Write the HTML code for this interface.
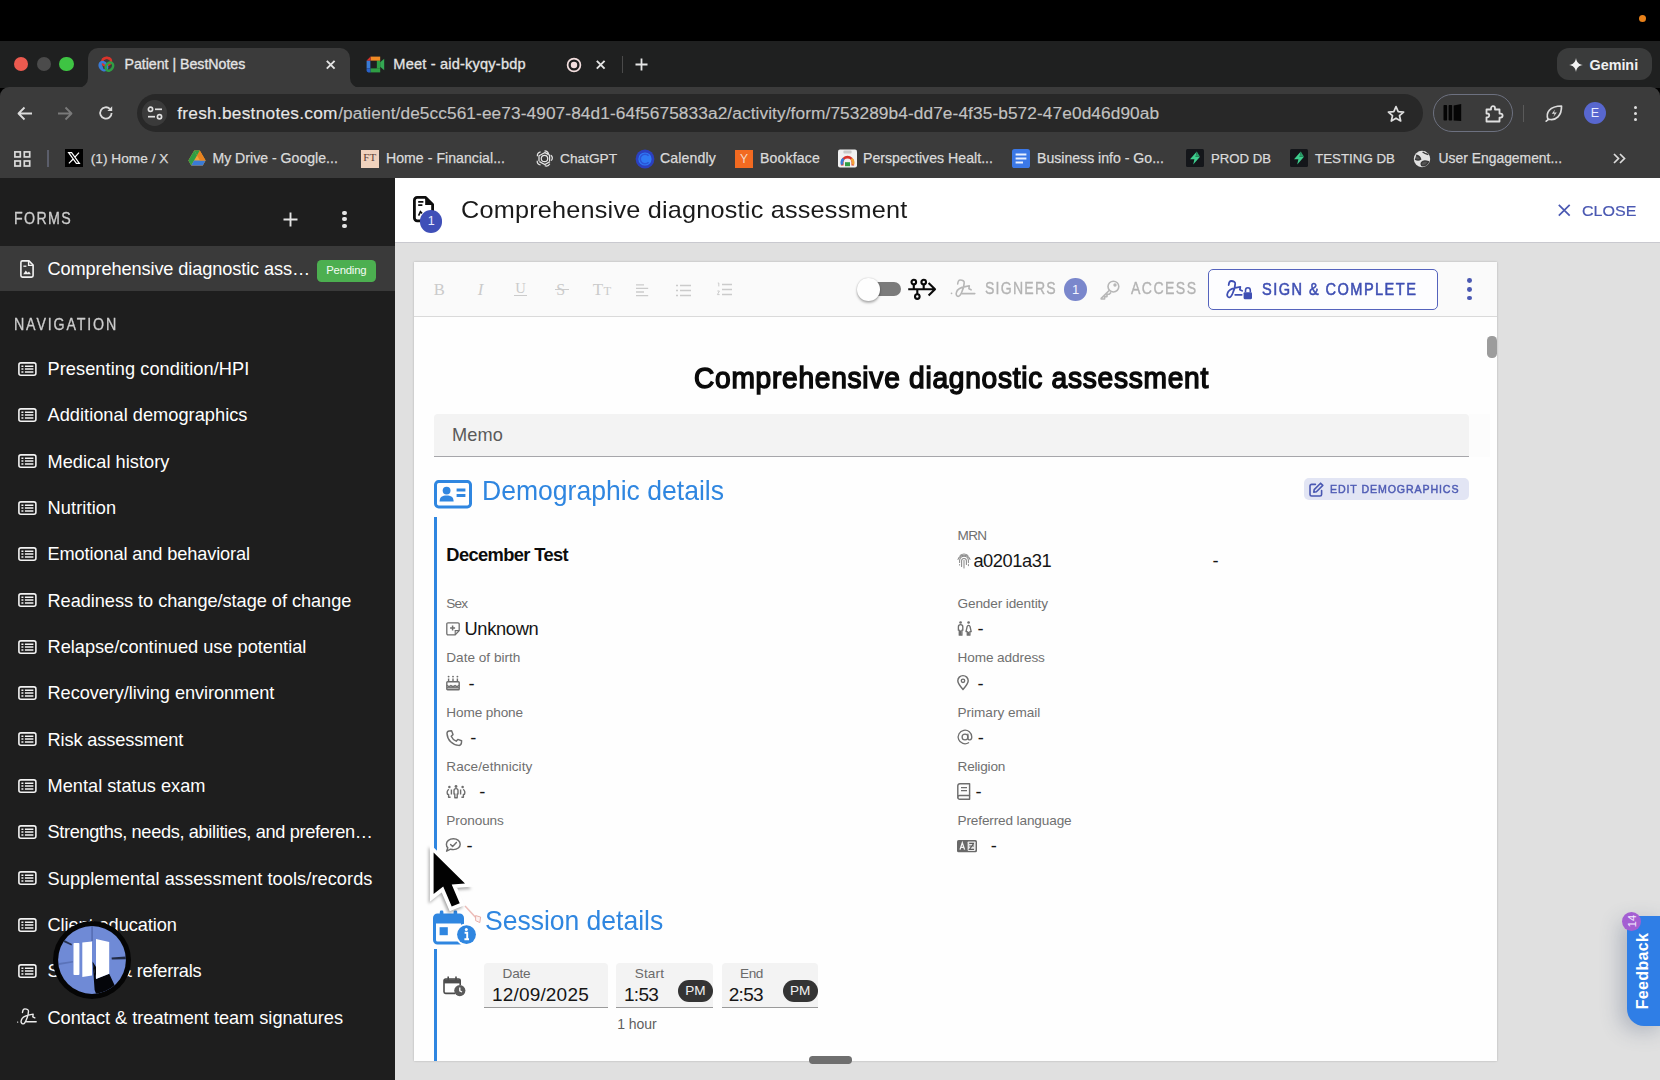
<!DOCTYPE html>
<html>
<head>
<meta charset="utf-8">
<title>Patient | BestNotes</title>
<style>
*{box-sizing:border-box;margin:0;padding:0}
html,body{width:1660px;height:1080px;overflow:hidden;background:#000;font-family:"Liberation Sans",sans-serif;}
.abs{position:absolute}
#root{position:relative;width:1660px;height:1080px;overflow:hidden;background:#000}
.t{position:absolute;white-space:nowrap;line-height:1}
svg{overflow:visible}
</style>
</head>
<body>
<div id="root">
<div class="abs" style="left:0px;top:41px;width:1660px;height:47px;background:#1f2020;"></div>
<div class="abs" style="left:0px;top:87px;width:1660px;height:91px;background:#3b3b3b;border-radius:9px 9px 0 0;"></div>
<div class="abs" style="left:88px;top:48px;width:262px;height:40px;background:#3b3b3b;border-radius:10px 10px 0 0;"></div>
<svg class="abs" style="left:78px;top:78px;" width="10" height="10" viewBox="0 0 10 10"><path d="M10 0 V10 H0 A10 10 0 0 0 10 0Z" fill="#3b3b3b"/></svg>
<svg class="abs" style="left:350px;top:78px;" width="10" height="10" viewBox="0 0 10 10"><path d="M0 0 V10 H10 A10 10 0 0 1 0 0Z" fill="#3b3b3b"/></svg>
<div class="abs" style="left:1638.5px;top:14.5px;width:7px;height:7px;background:#e8811a;border-radius:50%;"></div>
<div class="abs" style="left:14px;top:57px;width:14.4px;height:14.4px;background:#ec5a4f;border-radius:50%;"></div>
<div class="abs" style="left:36.7px;top:57px;width:14.4px;height:14.4px;background:#4b4b4b;border-radius:50%;"></div>
<div class="abs" style="left:59.3px;top:57px;width:14.4px;height:14.4px;background:#3ec443;border-radius:50%;"></div>
<svg class="abs" style="left:96.5px;top:54.5px;" width="19" height="19" viewBox="0 0 19 19"><g fill="none" stroke-width="2.5" stroke-linecap="round">
<ellipse cx="9.5" cy="6.6" rx="4.6" ry="3.6" stroke="#d9342b" transform="rotate(-18 9.5 6.6)"/>
<ellipse cx="6.4" cy="11.2" rx="4.4" ry="3.4" stroke="#3a7bd5" transform="rotate(55 6.4 11.2)"/>
<ellipse cx="12.4" cy="11.6" rx="4.4" ry="3.4" stroke="#2f9e44" transform="rotate(-55 12.4 11.6)"/>
<path d="M6 4.2 A4.6 3.6 -18 0 1 12 3.4" stroke="#d9342b"/><path d="M3.2 8.6 L5.2 13.8" stroke="#3a7bd5"/></g></svg>
<div class="t" style="left:124.50px;top:57.36px;font-size:14.2px;color:#e4e4e4;letter-spacing:-0.021px;-webkit-text-stroke:0.3px #e4e4e4;">Patient | BestNotes</div>
<svg class="abs" style="left:326.4px;top:59.6px;" width="9.4" height="9.4" viewBox="0 0 9.4 9.4"><path d="M0.8 0.8 L8.6 8.6 M8.6 0.8 L0.8 8.6" stroke="#e4e4e4" stroke-width="1.9" fill="none"/></svg>
<svg class="abs" style="left:366px;top:55.5px;" width="19" height="17" viewBox="0 0 19 17"><path d="M4.6 0.6 H14.2 V4.8 H4.6Z" fill="#f08a24"/><path d="M0.6 4.6 L4.6 0.6 V4.8 H0.6Z" fill="#d9342b"/>
<rect x="0.6" y="4.8" width="4" height="7.4" fill="#3a7bd5"/><path d="M0.6 12.2 H4.6 V16.4 H2.4 A1.8 1.8 0 0 1 0.6 14.6Z" fill="#2a62c9"/>
<path d="M4.6 12.2 H14.2 V16.4 H4.6Z" fill="#2f9e44"/><path d="M10.6 4.8 H14.2 V12.2 H10.6Z" fill="#2f9e44"/>
<path d="M14.2 6.2 L18.2 2.8 V14.2 L14.2 10.8Z" fill="#34a853"/><rect x="4.6" y="4.8" width="6" height="7.4" fill="#1f2020"/></svg>
<div class="t" style="left:393.30px;top:57.17px;font-size:14.6px;color:#e4e4e4;letter-spacing:0.186px;-webkit-text-stroke:0.3px #e4e4e4;">Meet - aid-kyqy-bdp</div>
<svg class="abs" style="left:565.5px;top:56.5px;" width="16" height="16" viewBox="0 0 16 16"><circle cx="8" cy="8" r="6.4" fill="none" stroke="#f3dede" stroke-width="1.7"/><circle cx="8" cy="8" r="3.2" fill="#f3dede"/></svg>
<svg class="abs" style="left:596.4px;top:59.6px;" width="9.4" height="9.4" viewBox="0 0 9.4 9.4"><path d="M0.8 0.8 L8.6 8.6 M8.6 0.8 L0.8 8.6" stroke="#e4e4e4" stroke-width="1.9" fill="none"/></svg>
<div class="abs" style="left:621.5px;top:56px;width:1.6px;height:17px;background:#4a4a4a;"></div>
<svg class="abs" style="left:635px;top:58px;" width="13" height="13" viewBox="0 0 13 13"><path d="M6.5 0.5 V12.5 M0.5 6.5 H12.5" stroke="#e6e6e6" stroke-width="1.8" fill="none"/></svg>
<div class="abs" style="left:1557px;top:48px;width:95px;height:32px;background:#3a3b3b;border-radius:12px;"></div>
<svg class="abs" style="left:1568.5px;top:57.5px;" width="14" height="14" viewBox="0 0 14 14"><path d="M7 0 C7.6 4.2 9.8 6.4 14 7 C9.8 7.6 7.6 9.8 7 14 C6.4 9.8 4.2 7.6 0 7 C4.2 6.4 6.4 4.2 7 0Z" fill="#f2f2f2"/></svg>
<div class="t" style="left:1589.50px;top:57.57px;font-size:14.4px;color:#f0f0f0;font-weight:700;letter-spacing:-0.030px;">Gemini</div>
<svg class="abs" style="left:17px;top:106px;" width="16" height="15" viewBox="0 0 16 15"><path d="M15 7.5 H2 M7.5 1.5 L1.5 7.5 L7.5 13.5" stroke="#dcdcdc" stroke-width="1.8" fill="none" stroke-linejoin="round"/></svg>
<svg class="abs" style="left:57px;top:106px;" width="16" height="15" viewBox="0 0 16 15"><path d="M1 7.5 H14 M8.5 1.5 L14.5 7.5 L8.5 13.5" stroke="#7a7a7a" stroke-width="1.8" fill="none" stroke-linejoin="round"/></svg>
<svg class="abs" style="left:98px;top:105px;" width="16" height="16" viewBox="0 0 16 16"><path d="M13.6 8 A5.7 5.7 0 1 1 11.9 3.9" stroke="#dcdcdc" stroke-width="1.8" fill="none"/><path d="M14.2 1.2 V6 H9.4Z" fill="#dcdcdc"/></svg>
<div class="abs" style="left:136.5px;top:94px;width:1286.5px;height:37.6px;background:#282828;border-radius:19px;"></div>
<div class="abs" style="left:142px;top:100.3px;width:25.4px;height:25.4px;background:#3a3a3a;border-radius:50%;"></div>
<svg class="abs" style="left:146.5px;top:106px;" width="16" height="14" viewBox="0 0 16 14"><g stroke="#e0e0e0" stroke-width="1.7" fill="none"><circle cx="3.5" cy="3.3" r="2.1"/><path d="M8 3.3 H15"/>
<circle cx="12.5" cy="10.7" r="2.1"/><path d="M1 10.7 H8"/></g></svg>
<div class="t" style="left:177.20px;top:105.05px;font-size:17.3px;color:#e6e6e6;letter-spacing:0.257px;-webkit-text-stroke:0.15px #e6e6e6;">fresh.bestnotes.com</div>
<div class="t" style="left:338.20px;top:105.05px;font-size:17.3px;color:#c2c2c2;letter-spacing:0.085px;-webkit-text-stroke:0.15px #c2c2c2;">/patient/de5cc561-ee73-4907-84d1-64f5675833a2/activity/form/753289b4-dd7e-4f35-b572-47e0d46d90ab</div>
<svg class="abs" style="left:1387px;top:104.5px;" width="18" height="17" viewBox="0 0 18 17"><path d="M9 1.6 L11.2 6.6 L16.6 7.1 L12.5 10.7 L13.7 16 L9 13.2 L4.3 16 L5.5 10.7 L1.4 7.1 L6.8 6.6Z" stroke="#dedede" stroke-width="1.7" fill="none" stroke-linejoin="round"/></svg>
<div class="abs" style="left:1433px;top:94px;width:79.5px;height:37.6px;border:1.2px solid #6d7180;border-radius:19px;"></div>
<svg class="abs" style="left:1443px;top:104px;" width="19" height="18" viewBox="0 0 19 18"><rect x="0.5" y="1" width="3.6" height="15.5" rx="0.8" fill="#050505"/><rect x="5.6" y="1" width="3.6" height="15.5" rx="0.8" fill="#050505"/><path d="M10.6 1.6 L18.2 0 V17 L10.6 16.4Z" fill="#050505"/></svg>
<svg class="abs" style="left:1485px;top:103.5px;" width="18" height="19" viewBox="0 0 18 19"><path d="M1.5 5.5 H6 V4.2 A2 2 0 0 1 10 4.2 V5.5 H14.5 V9.6 H15.6 A2 2 0 0 1 15.6 13.6 H14.5 V17.5 H1.5 V13.3 H2.3 A1.9 1.9 0 0 0 2.3 9.5 H1.5Z" stroke="#e0e0e0" stroke-width="1.8" fill="none" stroke-linejoin="round"/></svg>
<div class="abs" style="left:1522.8px;top:104.5px;width:1.6px;height:17px;background:#5a5a5a;"></div>
<svg class="abs" style="left:1545px;top:104px;" width="18" height="18" viewBox="0 0 18 18"><path d="M3 15.5 C0.5 9 4.5 2 16.5 2 C16.8 11.5 11 17 3.8 15.2 L1.2 17.2" stroke="#dcdcdc" stroke-width="1.7" fill="none" stroke-linejoin="round" stroke-linecap="round"/><path d="M10 5.5 L6.8 9.8 H9.6 L8.3 13 L11.8 8.6 H9Z" fill="#dcdcdc"/></svg>
<div class="abs" style="left:1583.8px;top:101.8px;width:22.6px;height:22.6px;background:#5867cf;border-radius:50%;"></div>
<div class="t" style="left:1590.83px;top:107.19px;font-size:12.5px;color:#e8ebff;">E</div>
<div class="abs" style="left:1633.8px;top:106.0px;width:3px;height:3px;background:#e0e0e0;border-radius:50%;"></div>
<div class="abs" style="left:1633.8px;top:111.9px;width:3px;height:3px;background:#e0e0e0;border-radius:50%;"></div>
<div class="abs" style="left:1633.8px;top:117.8px;width:3px;height:3px;background:#e0e0e0;border-radius:50%;"></div>
<svg class="abs" style="left:14px;top:150.5px;" width="17" height="16" viewBox="0 0 17 16"><g stroke="#dcdcdc" stroke-width="1.7" fill="none"><rect x="0.9" y="0.9" width="5.4" height="5" /><rect x="10.3" y="0.9" width="5.4" height="5"/><rect x="0.9" y="10" width="5.4" height="5"/><rect x="10.3" y="10" width="5.4" height="5"/></g></svg>
<div class="abs" style="left:47.3px;top:149.5px;width:1.6px;height:17px;background:#5b5e6b;"></div>
<div class="abs" style="left:65px;top:149px;width:18px;height:18px;background:#000;"></div>
<svg class="abs" style="left:68px;top:152px;" width="12" height="12" viewBox="0 0 12 12"><path d="M0.6 0.6 H3.6 L11.4 11.4 H8.4Z M11 0.6 L6.7 5.4 M5.2 7 L0.9 11.4" stroke="#fff" stroke-width="1.2" fill="none"/></svg>
<div class="t" style="left:90.80px;top:151.61px;font-size:13.7px;color:#dadada;-webkit-text-stroke:0.25px #dadada;">(1) Home / X</div>
<svg class="abs" style="left:188px;top:150px;" width="18" height="16" viewBox="0 0 18 16"><path d="M6.2 0.5 H11.8 L17.6 10.6 L14.8 15.5 H3.2 L0.4 10.6Z" fill="#f2a33a"/><path d="M6.2 0.5 L0.4 10.6 L3.2 15.5 L9 5.4Z" fill="#2f9e44"/><path d="M3.2 15.5 H14.8 L17.6 10.6 H6Z" fill="#3a7bd5"/><path d="M11.8 0.5 L17.6 10.6 H12 L9 5.4Z" fill="#e8831f"/><path d="M9 5.4 L6.2 0.5 H11.8Z" fill="#2f9e44"/></svg>
<div class="t" style="left:212.40px;top:151.41px;font-size:14.1px;color:#dadada;letter-spacing:0.009px;-webkit-text-stroke:0.25px #dadada;">My Drive - Google...</div>
<div class="abs" style="left:361px;top:149.5px;width:18px;height:18px;background:#f0d2bd;"></div>
<div class="t" style="left:363.27px;top:152.13px;font-size:11px;color:#5a4036;font-family:'Liberation Serif',serif;">FT</div>
<div class="t" style="left:386.00px;top:151.41px;font-size:14.1px;color:#dadada;letter-spacing:0.038px;-webkit-text-stroke:0.25px #dadada;">Home - Financial...</div>
<svg class="abs" style="left:535.5px;top:149.5px;" width="17" height="17" viewBox="0 0 17 17"><g stroke="#e4e4e4" stroke-width="1.25" fill="none"><circle cx="8.5" cy="8.5" r="3.2"/>
<path d="M8.5 1 a4 4 0 0 1 4 3.2 M15 5.2 a4 4 0 0 1 0.2 5.4 M13.8 13.8 a4 4 0 0 1 -5 1.9 M4.6 15 a4 4 0 0 1 -3.4 -4.2 M1.4 6.2 a4 4 0 0 1 3.2 -4.4 M3 11.2 L3 5.8 L8.5 2.8 M8.5 2.4 L13.6 5.2 L13.6 11 M14 11.6 L8.8 14.6 L3.4 11.6"/></g></svg>
<div class="t" style="left:560.00px;top:151.61px;font-size:13.7px;color:#dadada;letter-spacing:-0.009px;-webkit-text-stroke:0.25px #dadada;">ChatGPT</div>
<svg class="abs" style="left:635px;top:148.5px;" width="20" height="20" viewBox="0 0 20 20"><circle cx="10" cy="10" r="9.4" fill="#2b40c0"/><circle cx="10" cy="10" r="6.6" fill="#2f7af4"/><path d="M13.6 6.8 A4.8 4.8 0 1 0 13.6 13.2" stroke="#2b55d8" stroke-width="1.6" fill="none"/></svg>
<div class="t" style="left:660.00px;top:151.41px;font-size:14.1px;color:#dadada;letter-spacing:0.145px;-webkit-text-stroke:0.25px #dadada;">Calendly</div>
<div class="abs" style="left:735px;top:149.5px;width:18px;height:18px;background:#f26a21;"></div>
<div class="t" style="left:739.99px;top:152.64px;font-size:12px;color:#f6d9c6;">Y</div>
<div class="t" style="left:760.00px;top:151.41px;font-size:14.1px;color:#dadada;letter-spacing:0.154px;-webkit-text-stroke:0.25px #dadada;">Bookface</div>
<svg class="abs" style="left:838px;top:149px;" width="19" height="19" viewBox="0 0 19 19"><rect x="0" y="0.5" width="19" height="18" rx="2" fill="#f1f1f1"/><rect x="5.4" y="1.4" width="8.2" height="3" rx="1" fill="#c9c9c9"/><path d="M4.2 16.4 V13.4 A5.3 5.3 0 0 1 14.8 13.4 V16.4" stroke="#d9342b" stroke-width="2.6" fill="none"/><path d="M4.2 15.6 A5.3 5.3 0 0 1 5.6 9.8" stroke="#3a7bd5" stroke-width="2.6" fill="none"/><path d="M13.4 9.8 A5.3 5.3 0 0 1 14.8 15.6" stroke="#f2a33a" stroke-width="2.6" fill="none"/><rect x="7" y="13.2" width="5" height="4" fill="#2f9e44"/></svg>
<div class="t" style="left:863.00px;top:151.41px;font-size:14.1px;color:#dadada;letter-spacing:0.036px;-webkit-text-stroke:0.25px #dadada;">Perspectives Healt...</div>
<svg class="abs" style="left:1012px;top:149px;" width="18" height="19" viewBox="0 0 18 19"><rect x="0" y="0" width="18" height="19" rx="2.6" fill="#3b78e7"/><path d="M3.6 5.5 H14.4 M3.6 9.5 H14.4 M3.6 13.5 H11" stroke="#e9f0ff" stroke-width="1.9"/></svg>
<div class="t" style="left:1037.00px;top:151.41px;font-size:14.1px;color:#dadada;-webkit-text-stroke:0.25px #dadada;">Business info - Go...</div>
<svg class="abs" style="left:1186px;top:149px;" width="18" height="18" viewBox="0 0 18 18"><rect width="18" height="18" rx="1.5" fill="#14161a"/><path d="M10.8 2.5 L4 10.2 H8.4 L7.2 15.5 L14 7.8 H9.6Z" fill="#3ecf8e"/><path d="M10.8 2.5 L9.6 7.8 H14Z" fill="#2a9d68"/></svg>
<svg class="abs" style="left:1290px;top:149px;" width="18" height="18" viewBox="0 0 18 18"><rect width="18" height="18" rx="1.5" fill="#14161a"/><path d="M10.8 2.5 L4 10.2 H8.4 L7.2 15.5 L14 7.8 H9.6Z" fill="#3ecf8e"/><path d="M10.8 2.5 L9.6 7.8 H14Z" fill="#2a9d68"/></svg>
<div class="t" style="left:1211.00px;top:151.85px;font-size:13.2px;color:#dadada;letter-spacing:-0.013px;-webkit-text-stroke:0.25px #dadada;">PROD DB</div>
<div class="t" style="left:1315.00px;top:151.80px;font-size:13.3px;color:#dadada;letter-spacing:0.020px;-webkit-text-stroke:0.25px #dadada;">TESTING DB</div>
<svg class="abs" style="left:1413px;top:149.5px;" width="18" height="18" viewBox="0 0 18 18"><circle cx="9" cy="9" r="8.2" fill="#e2e2e2"/><path d="M3.2 5.2 C5.5 5.6 7 7 7.6 9.2 C6 10.4 4 10.2 2 9.2 M8.6 12.4 C10.2 10.6 12.6 10.6 15.4 11.8 C14 14.6 11.6 16 8.8 15.6 C8 14.6 8 13.4 8.6 12.4Z M9.6 2 C11.4 3.4 13.6 4.2 15.2 4.6" stroke="#3b3b3b" stroke-width="1.5" fill="#3b3b3b" fill-opacity=".85"/></svg>
<div class="t" style="left:1438.50px;top:151.51px;font-size:13.9px;color:#dadada;-webkit-text-stroke:0.25px #dadada;">User Engagement...</div>
<svg class="abs" style="left:1613px;top:153px;" width="13" height="11" viewBox="0 0 13 11"><path d="M1 1 L5.5 5.5 L1 10 M7 1 L11.5 5.5 L7 10" stroke="#dcdcdc" stroke-width="1.7" fill="none"/></svg>
<div class="abs" style="left:0px;top:178px;width:395px;height:902px;background:#1e1e1e;"></div>
<div class="t" style="left:14.00px;top:211.18px;font-size:15.8px;color:#cdcdcd;letter-spacing:1.480px;transform:scaleX(0.9);transform-origin:0 50%;-webkit-text-stroke:0.3px #cdcdcd;">FORMS</div>
<svg class="abs" style="left:282.5px;top:212px;" width="15" height="15" viewBox="0 0 15 15"><path d="M7.5 0.5 V14.5 M0.5 7.5 H14.5" stroke="#e4e4e4" stroke-width="1.9" fill="none"/></svg>
<div class="abs" style="left:342.4px;top:210.5px;width:4.2px;height:4.2px;background:#e4e4e4;border-radius:50%;"></div>
<div class="abs" style="left:342.4px;top:217.3px;width:4.2px;height:4.2px;background:#e4e4e4;border-radius:50%;"></div>
<div class="abs" style="left:342.4px;top:224.1px;width:4.2px;height:4.2px;background:#e4e4e4;border-radius:50%;"></div>
<div class="abs" style="left:0px;top:246.3px;width:395px;height:45.2px;background:#3a3a3a;"></div>
<svg class="abs" style="left:20px;top:260.3px;" width="14" height="18" viewBox="0 0 14 18"><path d="M2.4 0.9 H9 L13.1 5 V15.6 A1.5 1.5 0 0 1 11.6 17.1 H2.4 A1.5 1.5 0 0 1 0.9 15.6 V2.4 A1.5 1.5 0 0 1 2.4 0.9Z" stroke="#f2f2f2" stroke-width="1.6" fill="none" stroke-linejoin="round"/>
<path d="M8.6 1 V5.4 H13" stroke="#f2f2f2" stroke-width="1.4" fill="none"/><path d="M3.2 14.2 L5.8 10.6 L7.6 12.8 L9 11.6 L10.9 14.2Z" fill="#f2f2f2"/><path d="M3.4 6.2 H6.4" stroke="#f2f2f2" stroke-width="1.3"/></svg>
<div class="t" style="left:47.50px;top:259.91px;font-size:18.2px;color:#fff;letter-spacing:-0.116px;">Comprehensive diagnostic ass…</div>
<div class="abs" style="left:317px;top:259.5px;width:59px;height:22px;background:#4caf50;border-radius:4.5px;"></div>
<div class="t" style="left:326.30px;top:265.08px;font-size:11.3px;color:#f4fbf4;letter-spacing:-0.210px;">Pending</div>
<div class="t" style="left:14.00px;top:317.28px;font-size:15.8px;color:#cdcdcd;letter-spacing:2.046px;transform:scaleX(0.9);transform-origin:0 50%;-webkit-text-stroke:0.3px #cdcdcd;">NAVIGATION</div>
<div class="t" style="left:47.50px;top:359.91px;font-size:18.2px;color:#fff;letter-spacing:0.067px;">Presenting condition/HPI</div>
<svg class="abs" style="left:17.5px;top:361.7px;" width="18.8" height="14.2" viewBox="0 0 18.8 14.2"><rect x="0.9" y="0.9" width="17" height="12.4" rx="2" stroke="#f2f2f2" stroke-width="1.6" fill="none"/>
<path d="M3.4 4.2 H5.4 M3.4 7.1 H5.4 M3.4 10 H5.4" stroke="#f2f2f2" stroke-width="1.5"/><path d="M6.9 4.2 H15.4 M6.9 7.1 H15.4 M6.9 10 H15.4" stroke="#f2f2f2" stroke-width="1.5"/></svg>
<div class="t" style="left:47.50px;top:406.24px;font-size:18.2px;color:#fff;letter-spacing:0.035px;">Additional demographics</div>
<svg class="abs" style="left:17.5px;top:408.03px;" width="18.8" height="14.2" viewBox="0 0 18.8 14.2"><rect x="0.9" y="0.9" width="17" height="12.4" rx="2" stroke="#f2f2f2" stroke-width="1.6" fill="none"/>
<path d="M3.4 4.2 H5.4 M3.4 7.1 H5.4 M3.4 10 H5.4" stroke="#f2f2f2" stroke-width="1.5"/><path d="M6.9 4.2 H15.4 M6.9 7.1 H15.4 M6.9 10 H15.4" stroke="#f2f2f2" stroke-width="1.5"/></svg>
<div class="t" style="left:47.50px;top:452.57px;font-size:18.2px;color:#fff;letter-spacing:0.047px;">Medical history</div>
<svg class="abs" style="left:17.5px;top:454.36px;" width="18.8" height="14.2" viewBox="0 0 18.8 14.2"><rect x="0.9" y="0.9" width="17" height="12.4" rx="2" stroke="#f2f2f2" stroke-width="1.6" fill="none"/>
<path d="M3.4 4.2 H5.4 M3.4 7.1 H5.4 M3.4 10 H5.4" stroke="#f2f2f2" stroke-width="1.5"/><path d="M6.9 4.2 H15.4 M6.9 7.1 H15.4 M6.9 10 H15.4" stroke="#f2f2f2" stroke-width="1.5"/></svg>
<div class="t" style="left:47.50px;top:498.90px;font-size:18.2px;color:#fff;letter-spacing:0.118px;">Nutrition</div>
<svg class="abs" style="left:17.5px;top:500.69px;" width="18.8" height="14.2" viewBox="0 0 18.8 14.2"><rect x="0.9" y="0.9" width="17" height="12.4" rx="2" stroke="#f2f2f2" stroke-width="1.6" fill="none"/>
<path d="M3.4 4.2 H5.4 M3.4 7.1 H5.4 M3.4 10 H5.4" stroke="#f2f2f2" stroke-width="1.5"/><path d="M6.9 4.2 H15.4 M6.9 7.1 H15.4 M6.9 10 H15.4" stroke="#f2f2f2" stroke-width="1.5"/></svg>
<div class="t" style="left:47.50px;top:545.23px;font-size:18.2px;color:#fff;letter-spacing:-0.115px;">Emotional and behavioral</div>
<svg class="abs" style="left:17.5px;top:547.02px;" width="18.8" height="14.2" viewBox="0 0 18.8 14.2"><rect x="0.9" y="0.9" width="17" height="12.4" rx="2" stroke="#f2f2f2" stroke-width="1.6" fill="none"/>
<path d="M3.4 4.2 H5.4 M3.4 7.1 H5.4 M3.4 10 H5.4" stroke="#f2f2f2" stroke-width="1.5"/><path d="M6.9 4.2 H15.4 M6.9 7.1 H15.4 M6.9 10 H15.4" stroke="#f2f2f2" stroke-width="1.5"/></svg>
<div class="t" style="left:47.50px;top:591.56px;font-size:18.2px;color:#fff;letter-spacing:-0.045px;">Readiness to change/stage of change</div>
<svg class="abs" style="left:17.5px;top:593.35px;" width="18.8" height="14.2" viewBox="0 0 18.8 14.2"><rect x="0.9" y="0.9" width="17" height="12.4" rx="2" stroke="#f2f2f2" stroke-width="1.6" fill="none"/>
<path d="M3.4 4.2 H5.4 M3.4 7.1 H5.4 M3.4 10 H5.4" stroke="#f2f2f2" stroke-width="1.5"/><path d="M6.9 4.2 H15.4 M6.9 7.1 H15.4 M6.9 10 H15.4" stroke="#f2f2f2" stroke-width="1.5"/></svg>
<div class="t" style="left:47.50px;top:637.89px;font-size:18.2px;color:#fff;">Relapse/continued use potential</div>
<svg class="abs" style="left:17.5px;top:639.68px;" width="18.8" height="14.2" viewBox="0 0 18.8 14.2"><rect x="0.9" y="0.9" width="17" height="12.4" rx="2" stroke="#f2f2f2" stroke-width="1.6" fill="none"/>
<path d="M3.4 4.2 H5.4 M3.4 7.1 H5.4 M3.4 10 H5.4" stroke="#f2f2f2" stroke-width="1.5"/><path d="M6.9 4.2 H15.4 M6.9 7.1 H15.4 M6.9 10 H15.4" stroke="#f2f2f2" stroke-width="1.5"/></svg>
<div class="t" style="left:47.50px;top:684.22px;font-size:18.2px;color:#fff;letter-spacing:-0.062px;">Recovery/living environment</div>
<svg class="abs" style="left:17.5px;top:686.01px;" width="18.8" height="14.2" viewBox="0 0 18.8 14.2"><rect x="0.9" y="0.9" width="17" height="12.4" rx="2" stroke="#f2f2f2" stroke-width="1.6" fill="none"/>
<path d="M3.4 4.2 H5.4 M3.4 7.1 H5.4 M3.4 10 H5.4" stroke="#f2f2f2" stroke-width="1.5"/><path d="M6.9 4.2 H15.4 M6.9 7.1 H15.4 M6.9 10 H15.4" stroke="#f2f2f2" stroke-width="1.5"/></svg>
<div class="t" style="left:47.50px;top:730.55px;font-size:18.2px;color:#fff;letter-spacing:-0.111px;">Risk assessment</div>
<svg class="abs" style="left:17.5px;top:732.34px;" width="18.8" height="14.2" viewBox="0 0 18.8 14.2"><rect x="0.9" y="0.9" width="17" height="12.4" rx="2" stroke="#f2f2f2" stroke-width="1.6" fill="none"/>
<path d="M3.4 4.2 H5.4 M3.4 7.1 H5.4 M3.4 10 H5.4" stroke="#f2f2f2" stroke-width="1.5"/><path d="M6.9 4.2 H15.4 M6.9 7.1 H15.4 M6.9 10 H15.4" stroke="#f2f2f2" stroke-width="1.5"/></svg>
<div class="t" style="left:47.50px;top:776.88px;font-size:18.2px;color:#fff;letter-spacing:0.016px;">Mental status exam</div>
<svg class="abs" style="left:17.5px;top:778.67px;" width="18.8" height="14.2" viewBox="0 0 18.8 14.2"><rect x="0.9" y="0.9" width="17" height="12.4" rx="2" stroke="#f2f2f2" stroke-width="1.6" fill="none"/>
<path d="M3.4 4.2 H5.4 M3.4 7.1 H5.4 M3.4 10 H5.4" stroke="#f2f2f2" stroke-width="1.5"/><path d="M6.9 4.2 H15.4 M6.9 7.1 H15.4 M6.9 10 H15.4" stroke="#f2f2f2" stroke-width="1.5"/></svg>
<div class="t" style="left:47.50px;top:823.21px;font-size:18.2px;color:#fff;letter-spacing:-0.350px;">Strengths, needs, abilities, and preferen…</div>
<svg class="abs" style="left:17.5px;top:824.9999999999999px;" width="18.8" height="14.2" viewBox="0 0 18.8 14.2"><rect x="0.9" y="0.9" width="17" height="12.4" rx="2" stroke="#f2f2f2" stroke-width="1.6" fill="none"/>
<path d="M3.4 4.2 H5.4 M3.4 7.1 H5.4 M3.4 10 H5.4" stroke="#f2f2f2" stroke-width="1.5"/><path d="M6.9 4.2 H15.4 M6.9 7.1 H15.4 M6.9 10 H15.4" stroke="#f2f2f2" stroke-width="1.5"/></svg>
<div class="t" style="left:47.50px;top:869.54px;font-size:18.2px;color:#fff;letter-spacing:0.068px;">Supplemental assessment tools/records</div>
<svg class="abs" style="left:17.5px;top:871.33px;" width="18.8" height="14.2" viewBox="0 0 18.8 14.2"><rect x="0.9" y="0.9" width="17" height="12.4" rx="2" stroke="#f2f2f2" stroke-width="1.6" fill="none"/>
<path d="M3.4 4.2 H5.4 M3.4 7.1 H5.4 M3.4 10 H5.4" stroke="#f2f2f2" stroke-width="1.5"/><path d="M6.9 4.2 H15.4 M6.9 7.1 H15.4 M6.9 10 H15.4" stroke="#f2f2f2" stroke-width="1.5"/></svg>
<div class="t" style="left:47.50px;top:915.87px;font-size:18.2px;color:#fff;letter-spacing:-0.071px;">Client education</div>
<svg class="abs" style="left:17.5px;top:917.66px;" width="18.8" height="14.2" viewBox="0 0 18.8 14.2"><rect x="0.9" y="0.9" width="17" height="12.4" rx="2" stroke="#f2f2f2" stroke-width="1.6" fill="none"/>
<path d="M3.4 4.2 H5.4 M3.4 7.1 H5.4 M3.4 10 H5.4" stroke="#f2f2f2" stroke-width="1.5"/><path d="M6.9 4.2 H15.4 M6.9 7.1 H15.4 M6.9 10 H15.4" stroke="#f2f2f2" stroke-width="1.5"/></svg>
<div class="t" style="left:47.50px;top:962.20px;font-size:18.2px;color:#fff;letter-spacing:-0.244px;">Services &amp; referrals</div>
<svg class="abs" style="left:17.5px;top:963.9899999999999px;" width="18.8" height="14.2" viewBox="0 0 18.8 14.2"><rect x="0.9" y="0.9" width="17" height="12.4" rx="2" stroke="#f2f2f2" stroke-width="1.6" fill="none"/>
<path d="M3.4 4.2 H5.4 M3.4 7.1 H5.4 M3.4 10 H5.4" stroke="#f2f2f2" stroke-width="1.5"/><path d="M6.9 4.2 H15.4 M6.9 7.1 H15.4 M6.9 10 H15.4" stroke="#f2f2f2" stroke-width="1.5"/></svg>
<div class="t" style="left:47.50px;top:1008.53px;font-size:18.2px;color:#fff;letter-spacing:-0.020px;">Contact &amp; treatment team signatures</div>
<svg class="abs" style="left:19.6px;top:1006.82px;" width="24" height="21" viewBox="0 0 24 21"><g stroke="#ececec" stroke-width="1.5" fill="none" stroke-linecap="round" stroke-linejoin="round" transform="scale(0.92)"><path d="M-2.6 16.4 L-2.5 16.4"/><path d="M2.7 6 C2.9 3.6 4 2 5.3 2 C7.6 2 9.4 3 9.2 4.9 C9 8 8.2 11 7.1 13.2 C6.2 15.6 5 18 3.5 18.3 C1.8 18.6 0.8 16.6 1.3 14.7 C1.8 12.6 3 11.4 4.2 10.7 C6 9.6 7.6 9.2 9.2 8.9 L14.3 7.8 L13.9 10.7 L16.1 11.8"/><path d="M7 16 H17.6"/></g></svg>
<div class="abs" style="left:395px;top:178px;width:1265px;height:902px;background:#e0e0e0;"></div>
<div class="abs" style="left:395px;top:178px;width:1265px;height:64.5px;background:#fff;border-bottom:1px solid #c9c9cf;"></div>
<svg class="abs" style="left:413px;top:196.3px;" width="22" height="28" viewBox="0 0 22 28"><path d="M4.2 1.4 H12.6 L19.6 8.4 V22 A2.8 2.8 0 0 1 16.8 24.8 H4.2 A2.8 2.8 0 0 1 1.4 22 V4.2 A2.8 2.8 0 0 1 4.2 1.4Z" stroke="#0d0d0d" stroke-width="2.8" fill="none" stroke-linejoin="round"/>
<path d="M12.2 1.2 L20 9 H12.2Z" fill="#0d0d0d"/><path d="M5.2 5.8 H10.4 M5.2 9.2 H9.4" stroke="#0d0d0d" stroke-width="1.7"/><path d="M5.6 19.6 L7.4 15.6 L9 17.4" stroke="#0d0d0d" stroke-width="1.6" fill="none"/></svg>
<div class="abs" style="left:419.9px;top:210.1px;width:22.6px;height:22.6px;background:#3f4fb8;border-radius:50%;"></div>
<div class="t" style="left:427.72px;top:215.49px;font-size:12.5px;color:#e8ebff;">1</div>
<div class="t" style="left:461.00px;top:198.77px;font-size:23.6px;color:#1a1a1a;letter-spacing:0.194px;transform:scaleX(1.07);transform-origin:0 50%;">Comprehensive diagnostic assessment</div>
<svg class="abs" style="left:1557.5px;top:204px;" width="12.5" height="12.5" viewBox="0 0 12.5 12.5"><path d="M0.8 0.8 L11.7 11.7 M11.7 0.8 L0.8 11.7" stroke="#4a58b2" stroke-width="1.7" fill="none"/></svg>
<div class="t" style="left:1582.00px;top:203.08px;font-size:15.4px;color:#4a58b2;letter-spacing:0.043px;transform:scaleX(1.04);transform-origin:0 50%;-webkit-text-stroke:0.2px #4a58b2;">CLOSE</div>
<div class="abs" style="left:414px;top:261.5px;width:1083px;height:799.5px;background:#fefefe;box-shadow:0 0 2px rgba(0,0,0,.22);"></div>
<div class="abs" style="left:414px;top:261.5px;width:1083px;height:55.3px;background:#fafafa;border-bottom:1px solid #dadada;"></div>
<div class="t" style="left:433.66px;top:281.69px;font-size:16.6px;color:#cbcbcb;font-family:'Liberation Serif',serif;">B</div>
<div class="t" style="left:477.69px;top:281.69px;font-size:16.6px;color:#cbcbcb;font-style:italic;font-family:'Liberation Serif',serif;">I</div>
<div class="t" style="left:515.13px;top:281.47px;font-size:14.6px;color:#cbcbcb;font-family:'Liberation Serif',serif;">U</div>
<div class="abs" style="left:514.4px;top:294.8px;width:12.2px;height:1.3px;background:#cbcbcb;"></div>
<div class="t" style="left:556.16px;top:281.98px;font-size:16px;color:#cbcbcb;font-family:'Liberation Serif',serif;">S</div>
<div class="abs" style="left:554.5px;top:289.2px;width:14.4px;height:1.3px;background:#cbcbcb;"></div>
<div class="t" style="left:592.80px;top:281.30px;font-size:17px;color:#cbcbcb;font-family:'Liberation Serif',serif;">T</div>
<div class="t" style="left:603.55px;top:285.04px;font-size:12.6px;color:#cbcbcb;font-family:'Liberation Serif',serif;">T</div>
<svg class="abs" style="left:636.2px;top:283.6px;" width="13" height="13" viewBox="0 0 13 13"><path d="M0 0.8 H8 M0 4.4 H12.2 M0 8 H8 M0 11.6 H12.2" stroke="#cbcbcb" stroke-width="1.3"/></svg>
<svg class="abs" style="left:676px;top:283.5px;" width="15" height="13" viewBox="0 0 15 13"><path d="M4 1.5 H15 M4 6.5 H15 M4 11.5 H15" stroke="#cbcbcb" stroke-width="1.3"/><path d="M0 1.5 H2 M0 6.5 H2 M0 11.5 H2" stroke="#cbcbcb" stroke-width="1.6"/></svg>
<svg class="abs" style="left:717px;top:282px;" width="15" height="15" viewBox="0 0 15 15"><path d="M5 2.5 H15 M5 7.5 H15 M5 12.5 H15" stroke="#cbcbcb" stroke-width="1.3"/><path d="M0.8 1 H1.8 V4.4 M0.4 9 H2.4 L0.4 12.6 H2.6" stroke="#cbcbcb" stroke-width="1" fill="none"/></svg>
<div class="abs" style="left:866px;top:281.7px;width:34.6px;height:14.8px;background:#7b7b7b;border-radius:7.5px;"></div>
<div class="abs" style="left:857px;top:278.4px;width:22.6px;height:22.6px;background:#fefefe;border-radius:50%;box-shadow:0 2px 2.5px rgba(0,0,0,.28),0 0 1.5px rgba(0,0,0,.25);"></div>
<svg class="abs" style="left:907.6px;top:278.8px;" width="28" height="21" viewBox="0 0 28 21"><g stroke="#0a0a0a" stroke-width="2.1" fill="none" stroke-linejoin="round"><circle cx="5.8" cy="3.1" r="2.3"/><circle cx="15.7" cy="3.1" r="2.3"/><circle cx="9.3" cy="17.6" r="2.3"/>
<path d="M0.2 10.3 H26.6 M20.6 4 L27 10.3 L20.6 16.6 M5.8 5.6 V10.2 M15.7 5.6 V10.2 M9.3 10.4 V15.2"/></g></svg>
<svg class="abs" style="left:955px;top:278.2px;" width="24" height="21" viewBox="0 0 24 21"><g stroke="#b7b7b7" stroke-width="1.6" fill="none" stroke-linecap="round" stroke-linejoin="round"><path d="M-3.5 15.4 L-3.4 15.4"/><path d="M2.7 6 C2.9 3.6 4 2 5.3 2 C7.6 2 9.4 3 9.2 4.9 C9 8 8.2 11 7.1 13.2 C6.2 15.6 5 18 3.5 18.3 C1.8 18.6 0.8 16.6 1.3 14.7 C1.8 12.6 3 11.4 4.2 10.7 C6 9.6 7.6 9.2 9.2 8.9 L14.3 7.8 L13.9 10.7 L16.1 11.8"/><path d="M6.7 15.6 H19.8"/></g></svg>
<div class="t" style="left:984.90px;top:281.38px;font-size:16px;color:#b3b3b3;letter-spacing:1.400px;transform:scaleX(0.88);transform-origin:0 50%;-webkit-text-stroke:0.35px #b3b3b3;">SIGNERS</div>
<div class="abs" style="left:1064.4px;top:278px;width:22.6px;height:22.6px;background:#7a87cc;border-radius:50%;"></div>
<div class="t" style="left:1072.08px;top:283.25px;font-size:13px;color:#f4f5ff;">1</div>
<svg class="abs" style="left:1100px;top:279.5px;" width="20" height="20" viewBox="0 0 20 20"><g stroke="#b7b7b7" stroke-width="1.6" fill="none" stroke-linejoin="round"><circle cx="13.4" cy="6.6" r="5.4"/><path d="M9.4 10.2 L1.2 18.4 L1.2 19 H4.6 V16.6 H7 V14.2 H9.2 L11 12.4"/><circle cx="15" cy="5" r="0.9"/></g></svg>
<div class="t" style="left:1131.30px;top:281.38px;font-size:16px;color:#b3b3b3;letter-spacing:1.629px;transform:scaleX(0.88);transform-origin:0 50%;-webkit-text-stroke:0.35px #b3b3b3;">ACCESS</div>
<div class="abs" style="left:1208px;top:269px;width:230px;height:40.5px;background:#fdfdff;border:1.4px solid #5563bd;border-radius:5px;"></div>
<svg class="abs" style="left:1226px;top:279px;" width="27" height="21" viewBox="0 0 27 21"><g stroke="#3f4fb3" stroke-width="1.8" fill="none" stroke-linecap="round" stroke-linejoin="round"><path d="M2.7 6 C2.9 3.6 4 2 5.3 2 C7.6 2 9.4 3 9.2 4.9 C9 8 8.2 11 7.1 13.2 C6.2 15.6 5 18 3.5 18.3 C1.8 18.6 0.8 16.6 1.3 14.7 C1.8 12.6 3 11.4 4.2 10.7 C6 9.6 7.6 9.2 9.2 8.9 L14.3 7.8 L13.9 10.7 L16.1 11.8"/><path d="M9.2 15.8 H15.7"/></g>
<rect x="17.6" y="13.2" width="8.4" height="7" rx="1.1" fill="#3f4fb3"/><path d="M19.5 13.2 V11.3 A2.4 2.6 0 0 1 24.3 11.3 V13.2" stroke="#3f4fb3" stroke-width="1.6" fill="none"/></svg>
<div class="t" style="left:1262.40px;top:281.49px;font-size:16.2px;color:#3f4fb3;letter-spacing:1.609px;transform:scaleX(0.9);transform-origin:0 50%;-webkit-text-stroke:0.55px #3f4fb3;">SIGN &amp; COMPLETE</div>
<div class="abs" style="left:1467.1px;top:278.20000000000005px;width:4.8px;height:4.8px;background:#4a58b2;border-radius:50%;"></div>
<div class="abs" style="left:1467.1px;top:286.90000000000003px;width:4.8px;height:4.8px;background:#4a58b2;border-radius:50%;"></div>
<div class="abs" style="left:1467.1px;top:295.6px;width:4.8px;height:4.8px;background:#4a58b2;border-radius:50%;"></div>
<div class="abs" style="left:1487.4px;top:335.6px;width:9.4px;height:22.3px;background:#9c9c9c;border-radius:4.5px;"></div>
<div class="t" style="left:693.80px;top:364.03px;font-size:29px;color:#0a0a0a;letter-spacing:0.754px;transform:scaleX(0.97);transform-origin:0 50%;-webkit-text-stroke:1.45px #0a0a0a;">Comprehensive diagnostic assessment</div>
<div class="abs" style="left:434px;top:413.7px;width:1035px;height:43.5px;background:#f3f3f3;border-bottom:1.5px solid #a6a6aa;border-radius:4px 4px 0 0;"></div>
<div class="t" style="left:452.10px;top:426.21px;font-size:18.2px;color:#5a5a5a;letter-spacing:0.067px;">Memo</div>
<div class="abs" style="left:1469px;top:413.7px;width:21px;height:43px;background:#fcfcfc;"></div>
<svg class="abs" style="left:434px;top:480.3px;" width="38" height="28.5" viewBox="0 0 38 28.5"><rect x="1.5" y="1.5" width="35" height="25.5" rx="3.2" stroke="#2f86e0" stroke-width="3" fill="none"/>
<circle cx="12.6" cy="10.6" r="3.9" fill="#2f86e0"/><path d="M5.6 21.6 C5.6 17 8.4 15.6 12.6 15.6 C16.8 15.6 19.6 17 19.6 21.6Z" fill="#2f86e0"/>
<path d="M22.6 10 H31.4 M22.6 15.6 H31.4" stroke="#2f86e0" stroke-width="3"/></svg>
<div class="t" style="left:482.00px;top:477.22px;font-size:27.8px;color:#2f86e0;transform:scaleX(0.955);transform-origin:0 50%;">Demographic details</div>
<div class="abs" style="left:1303.5px;top:478.4px;width:165px;height:21.8px;background:#e2e5f4;border-radius:5px;"></div>
<svg class="abs" style="left:1309px;top:481.6px;" width="15" height="15" viewBox="0 0 15 15"><g stroke="#4a58b2" stroke-width="1.6" fill="none" stroke-linejoin="round" stroke-linecap="round"><path d="M6.4 2.4 H2.6 A1.6 1.6 0 0 0 1 4 V12.4 A1.6 1.6 0 0 0 2.6 14 H11 A1.6 1.6 0 0 0 12.6 12.4 V8.6"/><path d="M11.6 1.2 L13.8 3.4 L7.4 9.8 L4.8 10.2 L5.2 7.6Z"/></g></svg>
<div class="t" style="left:1329.60px;top:483.84px;font-size:11.8px;color:#4f5cb4;letter-spacing:0.990px;transform:scaleX(0.9);transform-origin:0 50%;-webkit-text-stroke:0.5px #4f5cb4;">EDIT DEMOGRAPHICS</div>
<div class="abs" style="left:433.7px;top:516.8px;width:3.7px;height:344px;background:#2f86e0;"></div>
<div class="abs" style="left:433.7px;top:949px;width:3.7px;height:112px;background:#2f86e0;"></div>
<div class="t" style="left:446.30px;top:545.76px;font-size:18.3px;color:#0c0c0c;font-weight:700;letter-spacing:-0.609px;">December Test</div>
<div class="t" style="left:957.50px;top:529.46px;font-size:13.6px;color:#707070;letter-spacing:-0.656px;">MRN</div>
<div class="t" style="left:973.40px;top:552.46px;font-size:18.3px;color:#161616;letter-spacing:-0.443px;">a0201a31</div>
<div class="t" style="left:1212.50px;top:552.46px;font-size:18.3px;color:#161616;">-</div>
<div class="t" style="left:446.30px;top:597.26px;font-size:13.6px;color:#707070;letter-spacing:-0.812px;">Sex</div>
<div class="t" style="left:446.30px;top:651.46px;font-size:13.6px;color:#707070;">Date of birth</div>
<div class="t" style="left:446.30px;top:705.66px;font-size:13.6px;color:#707070;letter-spacing:-0.114px;">Home phone</div>
<div class="t" style="left:446.30px;top:759.86px;font-size:13.6px;color:#707070;letter-spacing:0.044px;">Race/ethnicity</div>
<div class="t" style="left:446.30px;top:814.06px;font-size:13.6px;color:#707070;letter-spacing:-0.088px;">Pronouns</div>
<div class="t" style="left:957.50px;top:597.26px;font-size:13.6px;color:#707070;letter-spacing:-0.120px;">Gender identity</div>
<div class="t" style="left:957.50px;top:651.46px;font-size:13.6px;color:#707070;letter-spacing:-0.092px;">Home address</div>
<div class="t" style="left:957.50px;top:705.66px;font-size:13.6px;color:#707070;letter-spacing:-0.023px;">Primary email</div>
<div class="t" style="left:957.50px;top:759.86px;font-size:13.6px;color:#707070;letter-spacing:-0.178px;">Religion</div>
<div class="t" style="left:957.50px;top:814.06px;font-size:13.6px;color:#707070;letter-spacing:-0.133px;">Preferred language</div>
<div class="t" style="left:464.40px;top:620.46px;font-size:18.3px;color:#161616;letter-spacing:-0.317px;">Unknown</div>
<div class="t" style="left:468.40px;top:674.66px;font-size:18.3px;color:#161616;">-</div>
<div class="t" style="left:470.30px;top:728.86px;font-size:18.3px;color:#161616;">-</div>
<div class="t" style="left:479.20px;top:783.06px;font-size:18.3px;color:#161616;">-</div>
<div class="t" style="left:466.60px;top:837.26px;font-size:18.3px;color:#161616;">-</div>
<div class="t" style="left:977.40px;top:620.46px;font-size:18.3px;color:#161616;">-</div>
<div class="t" style="left:977.40px;top:674.66px;font-size:18.3px;color:#161616;">-</div>
<div class="t" style="left:977.80px;top:728.86px;font-size:18.3px;color:#161616;">-</div>
<div class="t" style="left:975.60px;top:783.06px;font-size:18.3px;color:#161616;">-</div>
<div class="t" style="left:990.70px;top:837.26px;font-size:18.3px;color:#161616;">-</div>
<svg class="abs" style="left:957.3px;top:552.8px;" width="14" height="16" viewBox="0 0 14 16"><g stroke="#8a8a8a" stroke-width="1.05" fill="none" stroke-linecap="round"><path d="M1 6.4 A6.4 6.4 0 0 1 13 6.4"/><path d="M2.6 9.4 V7.6 A4.4 4.4 0 0 1 11.4 7.6 V9.6"/><path d="M4.6 13.4 V7.8 A2.4 2.4 0 0 1 9.4 7.8 V11.4"/><path d="M7 7.6 V15"/><path d="M11.4 11.6 V12.6 M2.6 11.4 V12"/><path d="M3.2 2.4 A6.4 6.4 0 0 1 10.8 2.4"/></g></svg>
<svg class="abs" style="left:446px;top:622px;" width="14" height="13.6" viewBox="0 0 14 13.6"><path d="M0.8 2 A1.2 1.2 0 0 1 2 0.8 H12 A1.2 1.2 0 0 1 13.2 2 V8.6 L9.2 12.8 H2 A1.2 1.2 0 0 1 0.8 11.6Z" stroke="#6e6e6e" stroke-width="1.3" fill="none" stroke-linejoin="round"/><path d="M13 8.6 H9.2 V12.6" stroke="#6e6e6e" stroke-width="1.1" fill="none"/><path d="M6.6 3.4 V8.4 M4.1 5.9 H9.1" stroke="#6e6e6e" stroke-width="1.5"/></svg>
<svg class="abs" style="left:957.3px;top:621.2px;" width="15.4" height="15" viewBox="0 0 15.4 15"><g fill="#6e6e6e"><circle cx="3.6" cy="1.5" r="1.35"/><circle cx="11.6" cy="1.5" r="1.35"/></g>
<g stroke="#6e6e6e" stroke-width="1.35" fill="none" stroke-linejoin="round"><path d="M1.4 9.2 V5.8 A2.2 2.2 0 0 1 5.8 5.8 V9.2 H4.9 V14.2 H2.3 V9.2Z"/><path d="M3.6 9.4 V14"/><path d="M9 10.6 L10.2 5.4 A1.45 1.45 0 0 1 13 5.4 L14.2 10.6 H12.9 V14.2 H10.3 V10.6Z"/><path d="M11.6 10.8 V14"/></g></svg>
<svg class="abs" style="left:446px;top:675px;" width="14" height="15.6" viewBox="0 0 14 15.6"><g stroke="#6e6e6e" stroke-width="1.4" fill="none"><path d="M2.6 3.6 V6.6 M7 3.6 V6.6 M11.4 3.6 V6.6"/><rect x="0.8" y="6.8" width="12.4" height="8" rx="0.8"/><path d="M0.8 10.2 C2.4 11.8 3.6 11.8 4.9 10.6 C6.2 11.8 7.8 11.8 9.1 10.6 C10.4 11.8 11.6 11.8 13.2 10.2"/><path d="M1 12.8 H13"/></g><g fill="#6e6e6e"><circle cx="2.6" cy="1.6" r="0.95"/><circle cx="7" cy="1.6" r="0.95"/><circle cx="11.4" cy="1.6" r="0.95"/></g></svg>
<svg class="abs" style="left:957.2px;top:675px;" width="12" height="15.6" viewBox="0 0 12 15.6"><path d="M6 14.6 C2.4 10.4 0.8 8 0.8 5.8 A5.2 5.2 0 0 1 11.2 5.8 C11.2 8 9.6 10.4 6 14.6Z" stroke="#6e6e6e" stroke-width="1.45" fill="none" stroke-linejoin="round"/><circle cx="6" cy="5.8" r="1.7" stroke="#6e6e6e" stroke-width="1.4" fill="none"/></svg>
<svg class="abs" style="left:446px;top:729.5px;" width="16.5" height="16.5" viewBox="0 0 16.5 16.5"><path d="M3.2 1 L5.6 0.8 L7 4.6 L5.2 6.2 C6.2 8.4 8 10.2 10.2 11.2 L11.8 9.4 L15.6 10.8 L15.4 13.2 C15.2 14.6 14.2 15.4 12.8 15.4 C6.4 15 1.4 10 1 3.6 C1 2.2 1.8 1.2 3.2 1Z" stroke="#6e6e6e" stroke-width="1.45" fill="none" stroke-linejoin="round"/></svg>
<svg class="abs" style="left:957.3px;top:729.3px;" width="16" height="16" viewBox="0 0 16 16"><g stroke="#6e6e6e" stroke-width="1.3" fill="none" stroke-linecap="round"><circle cx="8" cy="8" r="2.9"/><path d="M10.9 5.2 V9 C10.9 11.6 14.8 11.6 14.8 8 A6.8 6.8 0 1 0 11.6 13.8"/></g></svg>
<svg class="abs" style="left:446px;top:785px;" width="20" height="13.6" viewBox="0 0 20 13.6"><g fill="#6e6e6e"><circle cx="10" cy="1.5" r="1.4"/><circle cx="3.4" cy="2" r="1.25"/><circle cx="16.6" cy="2" r="1.25"/></g>
<g stroke="#6e6e6e" stroke-width="1.4" fill="none" stroke-linejoin="round"><path d="M8 9 V5.6 A2 2 0 0 1 12 5.6 V9 H11.2 V12.8 H8.8 V9Z"/><path d="M3 4.4 C1.2 5 0.7 7.4 1.6 9.4 L2.6 9.4 V12.2 H4.6"/><path d="M17 4.4 C18.8 5 19.3 7.4 18.4 9.4 L17.4 9.4 V12.2 H15.4"/><path d="M5.4 4.6 V9.4 M14.6 4.6 V9.4"/></g></svg>
<svg class="abs" style="left:957.3px;top:782.6px;" width="14" height="17" viewBox="0 0 14 17"><g stroke="#6e6e6e" stroke-width="1.45" fill="none" stroke-linejoin="round"><path d="M2.8 0.8 H12.6 V12.4 H2.8 A2 2 0 0 0 0.8 14.4 V2.8 A2 2 0 0 1 2.8 0.8Z"/><path d="M0.8 14.4 A1.9 1.9 0 0 0 2.8 16.2 H12.6 V12.4"/><path d="M4 4.6 H10 M4 7.6 H10"/></g></svg>
<svg class="abs" style="left:445.4px;top:838.4px;" width="16" height="14" viewBox="0 0 16 14"><g stroke="#6e6e6e" stroke-width="1.45" fill="none" stroke-linejoin="round" stroke-linecap="round"><path d="M8.4 0.8 C12.4 0.8 15.2 3.2 15.2 6.2 C15.2 9.2 12.4 11.6 8.4 11.6 C7.4 11.6 6.4 11.4 5.6 11.2 L1.6 13.2 L2.8 9.8 C1.8 8.8 1.4 7.6 1.4 6.2 C1.4 3.2 4.4 0.8 8.4 0.8Z"/><path d="M5.6 6.4 L7.6 8.4 L11.4 4.4"/></g></svg>
<svg class="abs" style="left:957.3px;top:839.7px;" width="20" height="12.3" viewBox="0 0 20 12.3"><rect x="0" y="0" width="20" height="12.3" rx="1.6" fill="#696969"/><rect x="10.6" y="1.4" width="8" height="9.5" rx="0.8" fill="#e8e8e8"/>
<path d="M3 9.6 L5.3 2.8 L7.6 9.6 M3.8 7.4 H6.8" stroke="#f4f4f4" stroke-width="1.3" fill="none"/><path d="M12.2 3.4 H17 M12.2 6 H17 M16.6 3.6 L12.4 9.4 H17" stroke="#5c5c5c" stroke-width="1.1" fill="none"/></svg>
<svg class="abs" style="left:433.4px;top:910px;" width="44" height="35" viewBox="0 0 44 35"><rect x="6.8" y="0.6" width="3.6" height="7" rx="1.4" fill="#2f86e0"/><rect x="20.6" y="0.6" width="3.6" height="7" rx="1.4" fill="#2f86e0"/>
<rect x="1.5" y="5" width="28" height="28" rx="3" fill="none" stroke="#2f86e0" stroke-width="3"/><path d="M1.2 7 A2.6 2.6 0 0 1 3.8 4.4 H27.2 A2.6 2.6 0 0 1 29.8 7 V13.4 H1.2Z" fill="#2f86e0"/>
<rect x="6.6" y="17.2" width="8.2" height="8" fill="#2f86e0"/>
<circle cx="33.5" cy="24.6" r="11.2" fill="#fefefe"/><circle cx="33.5" cy="24.6" r="9.4" fill="#2f86e0"/><circle cx="33.3" cy="19.6" r="1.5" fill="#fff"/><path d="M31.6 22.8 H34.2 V29 M31.4 29.2 H36" stroke="#fff" stroke-width="1.9" fill="none"/></svg>
<div class="t" style="left:484.80px;top:907.02px;font-size:27.8px;color:#2f86e0;letter-spacing:-0.025px;transform:scaleX(0.955);transform-origin:0 50%;">Session details</div>
<svg class="abs" style="left:464px;top:905px;" width="18" height="19" viewBox="0 0 18 19"><path d="M1 1 L13.6 14.4" stroke="#ecbdb8" stroke-width="1.5" fill="none"/><path d="M11.6 10.6 L16.6 12 L15.8 17.6 L11.6 15.6Z" stroke="#e8b0aa" stroke-width="1" fill="#fdf1f0"/></svg>
<svg class="abs" style="left:443.4px;top:975.6px;" width="23" height="21" viewBox="0 0 23 21"><g stroke="#4c4c4c" stroke-width="1.6" fill="none" stroke-linejoin="round"><path d="M12 17.4 H2.6 A1.6 1.6 0 0 1 1 15.8 V4.6 A1.6 1.6 0 0 1 2.6 3 H15.6 A1.6 1.6 0 0 1 17.2 4.6 V9"/><path d="M5.2 0.6 V4.4 M13 0.6 V4.4"/></g><path d="M1 3.4 H17.2 V7.4 H1Z" fill="#4c4c4c"/>
<circle cx="16.8" cy="14.6" r="5.6" fill="#5a5a5a"/><path d="M16.8 11.4 V14.8 L19 16" stroke="#fff" stroke-width="1.3" fill="none"/></svg>
<div class="abs" style="left:484.2px;top:963.4px;width:123.6px;height:44.4px;background:#f3f3f3;border-bottom:1.3px solid #9a9a9a;border-radius:4px 4px 0 0;"></div>
<div class="abs" style="left:616.3px;top:963.4px;width:96.6px;height:44.4px;background:#f3f3f3;border-bottom:1.3px solid #9a9a9a;border-radius:4px 4px 0 0;"></div>
<div class="abs" style="left:722px;top:963.4px;width:96.2px;height:44.4px;background:#f3f3f3;border-bottom:1.3px solid #9a9a9a;border-radius:4px 4px 0 0;"></div>
<div class="t" style="left:502.60px;top:966.76px;font-size:13.6px;color:#6a6a6a;letter-spacing:-0.230px;">Date</div>
<div class="t" style="left:491.90px;top:985.02px;font-size:19px;color:#161616;letter-spacing:0.191px;">12/09/2025</div>
<div class="t" style="left:634.70px;top:966.76px;font-size:13.6px;color:#6a6a6a;letter-spacing:0.156px;">Start</div>
<div class="t" style="left:624.00px;top:985.02px;font-size:19px;color:#161616;letter-spacing:-0.696px;">1:53</div>
<div class="t" style="left:740.10px;top:966.76px;font-size:13.6px;color:#6a6a6a;letter-spacing:-0.496px;">End</div>
<div class="t" style="left:728.70px;top:985.02px;font-size:19px;color:#161616;letter-spacing:-0.696px;">2:53</div>
<div class="abs" style="left:678.2px;top:979.8px;width:34.6px;height:22.2px;background:#343434;border-radius:11.1px;"></div>
<div class="t" style="left:685.20px;top:984.36px;font-size:13.6px;color:#f1f1f1;">PM</div>
<div class="abs" style="left:783px;top:979.8px;width:34.6px;height:22.2px;background:#343434;border-radius:11.1px;"></div>
<div class="t" style="left:790.00px;top:984.36px;font-size:13.6px;color:#f1f1f1;">PM</div>
<div class="t" style="left:617.30px;top:1016.66px;font-size:14px;color:#5e5e5e;letter-spacing:-0.084px;">1 hour</div>
<div class="abs" style="left:809px;top:1056.2px;width:42.6px;height:7.4px;background:#6f6f6f;border-radius:3.7px;"></div>
<div class="abs" style="left:1626.5px;top:915.6px;width:40px;height:110px;background:#2f7ee6;border-radius:6px 0 0 17px;box-shadow:-7px 5px 20px rgba(70,85,120,.30);"></div>
<div class="t" style="left:1643.2px;top:970.5px;font-size:16px;font-weight:700;color:#fff;letter-spacing:0.35px;transform:translate(-50%,-50%) rotate(-90deg);">Feedback</div>
<div class="abs" style="left:1622.2px;top:911.8px;width:19px;height:19px;background:#a45fd2;border-radius:50%;"></div>
<div class="t" style="left:1631.8px;top:921.4px;font-size:11px;font-weight:400;color:#f6ecff;transform:translate(-50%,-50%) rotate(-90deg);">14</div>
<svg class="abs" style="left:52.6px;top:920.9px;" width="78" height="78" viewBox="0 0 78 78"><defs><clipPath id="fc"><circle cx="39" cy="39" r="33.9"/></clipPath></defs>
<circle cx="39" cy="39" r="39" fill="#050505"/><circle cx="39" cy="39" r="33.9" fill="#6f8ad6"/>
<g clip-path="url(#fc)"><path d="M10.2 18.6 L19 23 L18.4 24.6 L9.6 20.6Z" fill="#1b2238" fill-opacity=".85"/><path d="M58.6 36.6 L73 35.6 V38.2 L58.8 38.6Z" fill="#141a2c" fill-opacity=".85"/><path d="M38.4 5 H39.8 V20 H38.4Z" fill="#3d4f8e" fill-opacity=".55"/><path d="M6 42 L20 40 V41.4 L6 44Z" fill="#3d4f8e" fill-opacity=".4"/>
<path d="M39.6 40.4 L43 57.9 L56.2 52.7 L61.5 64.1 L58 72 L44 75 L41.6 69.1Z" fill="#05060a"/></g>
<rect x="20.5" y="21.9" width="5.9" height="32.1" rx="0.8" fill="#fff"/><path d="M29.3 21.4 L39 20.4 V54.6 L29.3 55.9Z" fill="#fff"/><path d="M43 17.9 L56.2 21 V52.7 L43 57.9Z" fill="#fff"/>
<path d="M39.6 40.4 L43 57.9 V46Z" fill="#05060a"/></svg>
<svg class="abs" style="left:420px;top:840px;" width="60" height="80" viewBox="0 0 60 80"><defs><filter id="cs" x="-40%" y="-40%" width="180%" height="180%"><feGaussianBlur stdDeviation="1.6"/></filter></defs>
<path d="M13.6 12.6 V54.1 L23.2 46.6 L31.7 66.4 L39.7 63.2 L31.7 44.5 L45 43.5Z" fill="#000" fill-opacity=".3" stroke="#000" stroke-opacity=".3" stroke-width="7" stroke-linejoin="miter" filter="url(#cs)" transform="translate(-1.5,2.5)"/>
<path d="M13.6 12.6 V54.1 L23.2 46.6 L31.7 66.4 L39.7 63.2 L31.7 44.5 L45 43.5Z" fill="#fff" stroke="#fff" stroke-width="7.4" stroke-linejoin="miter" stroke-miterlimit="3"/>
<path d="M13.6 12.6 V54.1 L23.2 46.6 L31.7 66.4 L39.7 63.2 L31.7 44.5 L45 43.5Z" fill="#020202"/></svg>
</div>
</body>
</html>
